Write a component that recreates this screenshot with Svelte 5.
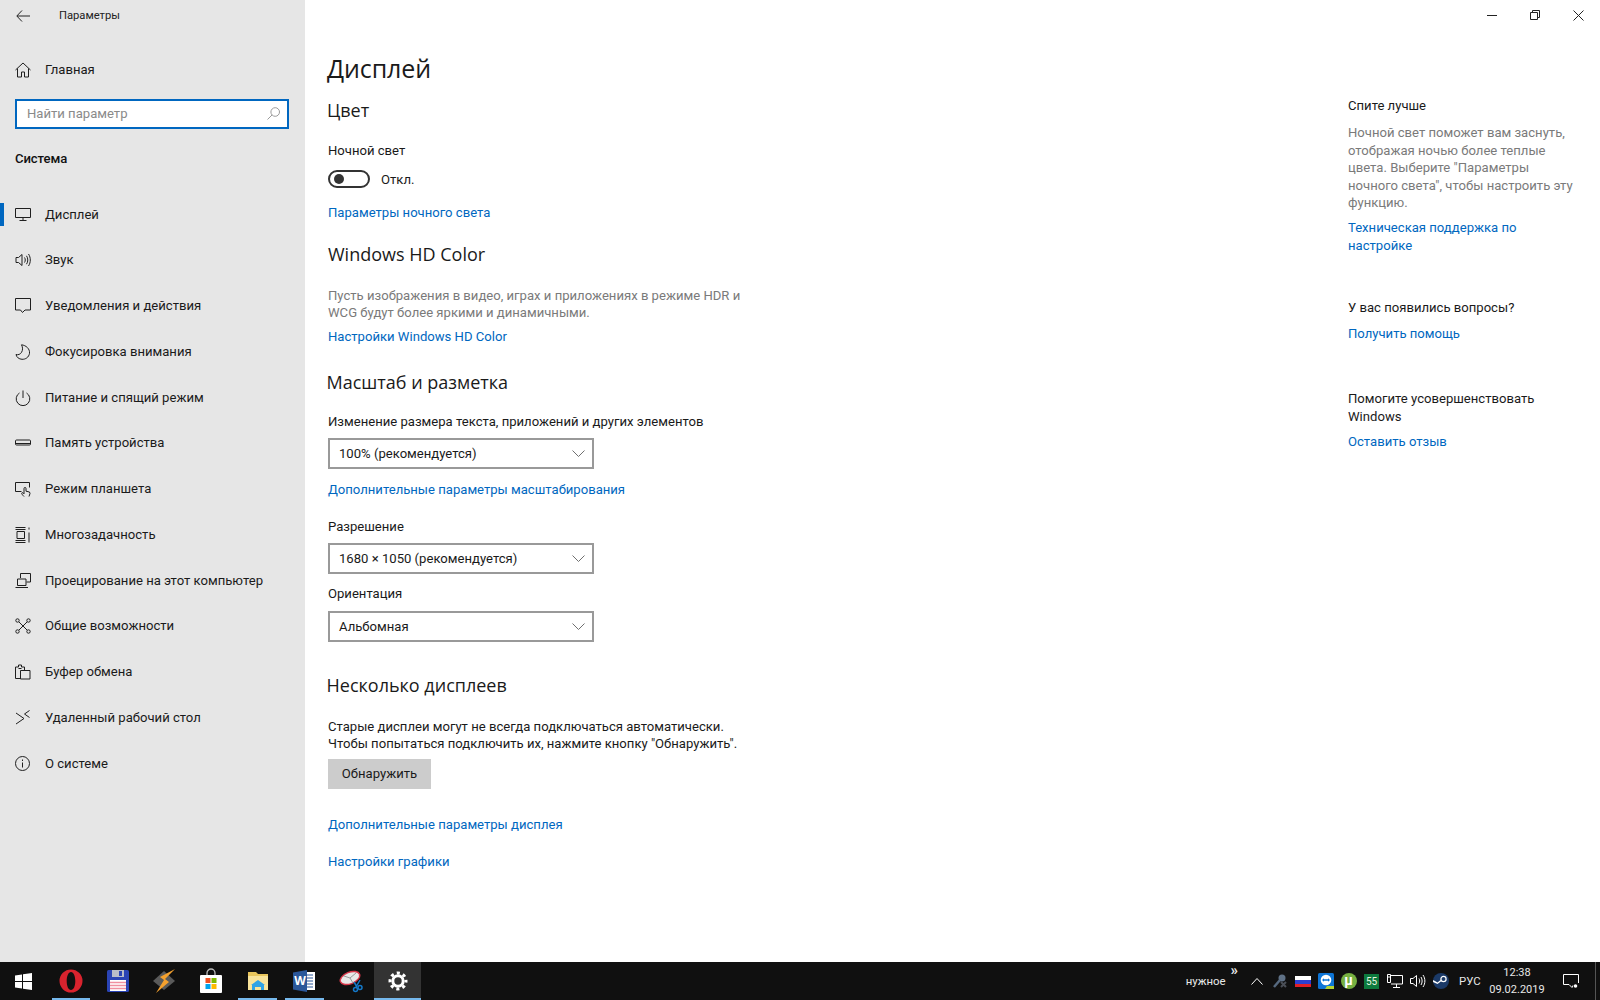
<script>
  const navItems = [
    { label: 'Дисплей', active: true, d: 'M.5 1.5h15v9H.5z M8 10.500v3 M4.500 13.500h7' },
    { label: 'Звук', d: 'M1 5.500h2.500L7 2.500v11l-3.500-3H1z M9.500 5.500c1 1.500 1 3.500 0 5 M11.500 3.800c1.700 2.500 1.700 5.900 0 8.400 M13.500 2c2.400 3.600 2.400 8.400 0 12' },
    { label: 'Уведомления и действия', d: 'M.5 .5h15v11.500H10L7.500 14.500 5.500 12H.5z' },
    { label: 'Фокусировка внимания', d: 'M6.500 .8c4.500 .5 8.500 4 8 8.500-.6 4-4 6.200-7.500 6-3-.2-5.500-2-6-4.800 4.500 1.500 8.500-4.200 5.500-9.700z' },
    { label: 'Питание и спящий режим', d: 'M8 .5v7.500 M4.500 3A6.800 6.800 0 1 0 11.500 3' },
    { label: 'Память устройства', d: 'M1.500 5h13a1 1 0 0 1 1 1v3a1 1 0 0 1-1 1h-13a1 1 0 0 1-1-1V6a1 1 0 0 1 1-1z M1 8.500h14' },
    { label: 'Режим планшета', d: 'M6.500 10.500H.5v-9h14v5 M9 15.500c-1.500-1.500-3-3.200-2-3.800.6-.3 1.300.3 2 1.200V7.500a1 1 0 0 1 2 0v2.700l3.500.8.5 1.500-1 3' },
    { label: 'Многозадачность', d: 'M.5 .5h10 M.5 15.500h10 M.5 13.500h10 M.5 2.500h10 M2 4.500h7.500v7H2z M14 .5v2 M14 5.500v10' },
    { label: 'Проецирование на этот компьютер', d: 'M5.500 5V.5h10v8.500h-4 M2.500 6h8.500v6.500H2.500z M.5 14.500h12.500' },
    { label: 'Общие возможности', d: 'M4 4l8 8 M12 4l-8 8 M4.200 2.500a1.700 1.700 0 1 1-3.400 0 1.700 1.700 0 0 1 3.400 0z M15.200 2.500a1.700 1.700 0 1 1-3.400 0 1.700 1.700 0 0 1 3.400 0z M4.200 13.500a1.700 1.700 0 1 1-3.400 0 1.700 1.700 0 0 1 3.400 0z M15.200 13.500a1.700 1.700 0 1 1-3.400 0 1.700 1.700 0 0 1 3.400 0z' },
    { label: 'Буфер обмена', d: 'M.5 3h3V1h3v2h3V6 M.5 3v11.500h5 M5.500 6.500h9.500v8.500H5.500z M3.500 4.500h3' },
    { label: 'Удаленный рабочий стол', d: 'M1 3l8 5.500-8 5.500 M14.500 .5L9.500 4l5 3.500' },
    { label: 'О системе', d: 'M14.500 7.500a7 7 0 1 1-14 0 7 7 0 0 1 14 0z M7.500 6.500v5 M7.500 3.500v1.500' }
  ];

  const lang = 'РУС';
</script>

<div class="screen">
  <div class="window">
    <aside class="sidebar">
      <div class="titlebar">
        <svg class="back" width="14" height="12" viewBox="0 0 14 12"><path d="M6 .5L.8 6 6 11.500 M1 6h13" /></svg>
        <span class="app-name">Параметры</span>
      </div>
      <div class="nav-item home">
        <svg class="icon" viewBox="0 0 16 16"><path d="M8 1L.5 8 M8 1l7.500 7 M2.500 6.500v8.500h4v-5h3v5h4V6.500" /></svg>
        <span>Главная</span>
      </div>
      <div class="search">
        <span>Найти параметр</span>
        <svg width="13" height="13" viewBox="0 0 13 13"><path d="M12.500 5a4.300 4.300 0 1 1-8.600 0 4.300 4.300 0 0 1 8.600 0z M5 8L.5 12.500" /></svg>
      </div>
      <div class="group-title">Система</div>
      <nav>
        {#each navItems as item}
          <div class="nav-item" class:active={item.active}>
            <svg class="icon" viewBox="0 0 16 16"><path d={item.d} /></svg>
            <span>{item.label}</span>
          </div>
        {/each}
      </nav>
    </aside>

    <main class="page">
      <div class="window-controls">
        <svg width="10" height="10" viewBox="0 0 10 10"><path d="M0 5.500h10" /></svg>
        <svg width="10" height="10" viewBox="0 0 10 10"><path d="M.5 2.500h7v7h-7z M2.500 2.500V.5h7v7h-2" /></svg>
        <svg width="11" height="11" viewBox="0 0 11 11"><path d="M.5 .5l10 10 M10.500 .5l-10 10" /></svg>
      </div>
      <div class="columns">
        <section class="content">
          <h1>Дисплей</h1>
          <h2 class="color">Цвет</h2>
          <div class="text night">Ночной свет</div>
          <div class="toggle-row">
            <span class="toggle"><i></i></span>
            <span class="toggle-state">Откл.</span>
          </div>
          <a class="link night-link">Параметры ночного света</a>
          <h2 class="hd">Windows HD Color</h2>
          <p class="muted hd-text">Пусть изображения в видео, играх и приложениях в режиме HDR и<br />WCG будут более яркими и динамичными.</p>
          <a class="link hd-link">Настройки Windows HD Color</a>
          <h2 class="scale">Масштаб и разметка</h2>
          <div class="text scale-label">Изменение размера текста, приложений и других элементов</div>
          <div class="select s1">
            <span>100% (рекомендуется)</span>
            <svg width="13" height="7" viewBox="0 0 13 7"><path d="M.5 .5l6 6 6-6" /></svg>
          </div>
          <a class="link scale-link">Дополнительные параметры масштабирования</a>
          <div class="text res-label">Разрешение</div>
          <div class="select s2">
            <span>1680 × 1050 (рекомендуется)</span>
            <svg width="13" height="7" viewBox="0 0 13 7"><path d="M.5 .5l6 6 6-6" /></svg>
          </div>
          <div class="text or-label">Ориентация</div>
          <div class="select s3">
            <span>Альбомная</span>
            <svg width="13" height="7" viewBox="0 0 13 7"><path d="M.5 .5l6 6 6-6" /></svg>
          </div>
          <h2 class="multi">Несколько дисплеев</h2>
          <p class="multi-text">Старые дисплеи могут не всегда подключаться автоматически.<br />Чтобы попытаться подключить их, нажмите кнопку "Обнаружить".</p>
          <button>Обнаружить</button>
          <a class="link adv-link">Дополнительные параметры дисплея</a>
          <a class="link gfx-link">Настройки графики</a>
        </section>

        <section class="side">
          <div class="text">Спите лучше</div>
          <p class="muted sleep-text">Ночной свет поможет вам заснуть,<br />отображая ночью более теплые<br />цвета. Выберите "Параметры<br />ночного света", чтобы настроить эту<br />функцию.</p>
          <a class="link multi-line">Техническая поддержка по<br />настройке</a>
          <div class="text q">У вас появились вопросы?</div>
          <a class="link after">Получить помощь</a>
          <p class="improve">Помогите усовершенствовать<br />Windows</p>
          <a class="link after">Оставить отзыв</a>
        </section>
      </div>
    </main>
  </div>

  <footer class="taskbar">
    <div class="tile start">
      <svg width="17" height="17" viewBox="0 0 17 17" fill="#fff"><path d="M0 2.500L7 1.500v6.500H0z M8 1.300L17 0v8H8z M0 9h7v6.500L0 14.500z M8 9h9v8l-9-1.300z" /></svg>
    </div>
    <div class="tile running">
      <svg width="24" height="24" viewBox="0 0 24 24"><path fill="#d9232e" fill-rule="evenodd" d="M12 .5a11.500 11.500 0 1 0 0 23 11.500 11.500 0 0 0 0-23z M12 3c2.600 0 4.300 4 4.300 9s-1.700 9-4.300 9-4.300-4-4.300-9 1.700-9 4.300-9z" /></svg>
    </div>
    <div class="tile">
      <svg width="24" height="24" viewBox="0 0 24 24"><rect x="1" y="1" width="22" height="22" rx="1.500" fill="#2a44b5" /><rect x="6" y="1" width="12" height="7" fill="#b9bdc9" /><rect x="13" y="2" width="3" height="5" fill="#2a44b5" /><rect x="4" y="11" width="16" height="11" fill="#fff" /><path d="M4 13.500h16 M4 16.500h16 M4 19.500h16" stroke="#f08fa0" stroke-width="1.500" /></svg>
    </div>
    <div class="tile">
      <svg width="26" height="26" viewBox="0 0 26 26"><path fill="#5a5a5a" d="M13 3l11 10-11 9L2 13z" /><path fill="#f5a12e" d="M24 1L9 9l4 3-8 13 13-11-4-3z" /></svg>
    </div>
    <div class="tile">
      <svg width="24" height="26" viewBox="0 0 24 26"><path fill="none" stroke="#bbb" stroke-width="1.300" d="M8 8V5a4 4 0 0 1 8 0v3" /><rect x="1" y="7" width="22" height="18" rx="1" fill="#fff" /><rect x="6.500" y="10" width="5" height="5" fill="#f25022" /><rect x="12.500" y="10" width="5" height="5" fill="#7fba00" /><rect x="6.500" y="16" width="5" height="5" fill="#00a4ef" /><rect x="12.500" y="16" width="5" height="5" fill="#ffb900" /></svg>
    </div>
    <div class="tile running">
      <svg width="22" height="20" viewBox="0 0 22 20"><path fill="#e8c55c" d="M1 1h8l2 2h10v16H1z" /><path fill="#f8e39a" d="M1 5h20v14H1z" /><path fill="#2fa3e6" d="M5 19v-5h-1l7-5 7 5h-1v5h-3v-3H8v3z" /></svg>
    </div>
    <div class="tile running">
      <svg width="22" height="22" viewBox="0 0 22 22"><rect x="8" y="2" width="14" height="18" fill="#fff" /><path d="M13 5h7 M13 8h7 M13 11h7 M13 14h7 M13 17h7" stroke="#2b579a" stroke-width="1.200" /><path fill="#2b579a" d="M0 2.500L14 0v22L0 19.500z" /><text x="7" y="15" class="word-w" text-anchor="middle">W</text></svg>
    </div>
    <div class="tile">
      <svg width="24" height="24" viewBox="0 0 24 24"><ellipse cx="11" cy="9" rx="11" ry="6.500" fill="#d8374a" transform="rotate(-22 11 9)" /><ellipse cx="11" cy="9" rx="9.500" ry="5" fill="#e8e8e8" transform="rotate(-22 11 9)" /><path d="M11 9L5 7 M11 9l6-5 M11 9l3 5" stroke="#999" fill="none" /><path d="M15 13l3 5 M21 11l-4 7" stroke="#1478c8" stroke-width="1.500" fill="none" /><circle cx="16.500" cy="20.500" r="2" fill="none" stroke="#1478c8" stroke-width="1.500" /><circle cx="21" cy="18.500" r="2" fill="none" stroke="#1478c8" stroke-width="1.500" /></svg>
    </div>
    <div class="tile running current">
      <svg width="20" height="20" viewBox="0 0 20 20" fill="none" stroke="#fff"><circle cx="10" cy="10" r="5.200" stroke-width="3" /><circle cx="10" cy="10" r="8" stroke-width="3" stroke-dasharray="3.100 3.183" stroke-dashoffset="1.500" /></svg>
    </div>

    <div class="tray">
      <span class="toolbar-name">нужное</span>
      <span class="more">»</span>
      <span class="tray-icon chevron"><svg width="12" height="7" viewBox="0 0 12 7" fill="none" stroke="#fff"><path d="M.5 6.500l5.500-6 5.500 6" /></svg></span>
      <span class="tray-icon">
        <svg width="16" height="16" viewBox="0 0 16 16"><circle cx="10" cy="5" r="3.500" fill="#5f7186" /><path d="M2 14l6-7" stroke="#56697f" stroke-width="2.500" /><path d="M9 9l5 5 M14 9l-5 5" stroke="#4a4f57" stroke-width="2" /></svg>
      </span>
      <span class="tray-icon">
        <svg width="16" height="11" viewBox="0 0 16 11"><rect width="16" height="4" fill="#fff" /><rect y="4" width="16" height="4" fill="#2b3fd0" /><rect y="8" width="16" height="3" fill="#e01f26" /></svg>
      </span>
      <span class="tray-icon">
        <svg width="16" height="16" viewBox="0 0 16 16"><rect width="16" height="16" rx="1.500" fill="#0e75d6" /><circle cx="8" cy="7" r="5.300" fill="#fff" /><path d="M4 7l2-1.800v1.100h4V5.200L12 7l-2 1.800V7.700H6v1.100z" fill="#0e75d6" /><path d="M7 16l2-3h7v3z" fill="#b5d334" /></svg>
      </span>
      <span class="tray-icon">
        <span class="utorrent">µ</span>
      </span>
      <span class="tray-icon">
        <span class="badge">55</span>
      </span>
      <span class="tray-icon">
        <svg width="16" height="14" viewBox="0 0 16 14" fill="none" stroke="#fff"><path d="M4 1.500H15.500V10H4 M9.500 10v3 M6 13.500h7 M.5 .5h3v8h-3z M1 3h2" /></svg>
      </span>
      <span class="tray-icon">
        <svg width="16" height="14" viewBox="0 0 16 14" fill="none" stroke="#fff"><path d="M.5 4.500H3L6.500 1.500v11L3 9.500H.5z M9 4.500c.9 1.500.9 3.500 0 5 M11 3c1.500 2.500 1.500 5.500 0 8 M13 1c2.500 3.700 2.500 8.300 0 12" /></svg>
      </span>
      <span class="tray-icon">
        <svg width="16" height="16" viewBox="0 0 16 16"><circle cx="8" cy="8" r="8" fill="#1b3a68" /><circle cx="10.500" cy="6" r="2.600" fill="none" stroke="#fff" stroke-width="1.200" /><path d="M0 9l4.500 2 4-3-1-1-3 2.500L.2 7z" fill="#fff" /></svg>
      </span>
      <span class="lang">{lang}</span>
      <div class="clock">
        <span>12:38</span>
        <span>09.02.2019</span>
      </div>
      <span class="notify">
        <svg width="16" height="15" viewBox="0 0 16 15" fill="none" stroke="#fff"><path d="M.5 .5h15v8.500 M.5 .5v10h5.500l3 3 .8-2" /><circle cx="12.500" cy="12" r="1.800" fill="#fff" stroke="none" /></svg>
      </span>
      <span class="show-desktop"></span>
    </div>
  </footer>
</div>

<style>
  :global(body) {
    margin: 0;
    background: #fff;
  }

  .screen {
    width: 1600px;
    height: 1000px;
    display: flex;
    flex-direction: column;
    overflow: hidden;
    font-family: Roboto, "Open Sans", sans-serif;
    font-size: 13.100px;
    line-height: 18px;
    color: #1a1a1a;
  }

  .window {
    flex: 1;
    display: flex;
    min-height: 0;
  }

  .sidebar {
    width: 305px;
    flex: none;
    background: #e6e6e6;
  }

  .titlebar {
    height: 32px;
    display: flex;
    align-items: center;
  }

  .back {
    margin-left: 16px;
    fill: none;
    stroke: #222;
  }

  .app-name {
    margin-left: 29px;
    font-size: 11.200px;
    color: #222;
  }

  .nav-item {
    height: 45.750px;
    display: flex;
    align-items: center;
    padding-left: 15px;
    position: relative;
  }

  .nav-item .icon {
    width: 16px;
    height: 16px;
    flex: none;
    fill: none;
    stroke: #1f1f1f;
    stroke-width: 1;
    margin-right: 14px;
  }

  .nav-item.active::before {
    content: '';
    position: absolute;
    left: 0;
    top: 11px;
    width: 4px;
    height: 23px;
    background: #0067c0;
  }

  .home {
    margin-top: 15px;
  }

  .search {
    width: 274px;
    height: 30px;
    box-sizing: border-box;
    margin: 6px 0 0 15px;
    border: 2px solid #0067c0;
    background: #fff;
    display: flex;
    align-items: center;
    justify-content: space-between;
    padding: 0 7px 0 10px;
    color: #8a8a8a;
  }

  .search svg {
    fill: none;
    stroke: #9a9a9a;
  }

  .group-title {
    margin: 21px 0 0 15px;
    font-weight: 500;
    letter-spacing: -0.1px;
    color: #111;
  }

  nav {
    margin-top: 24px;
  }

  .page {
    flex: 1;
    display: flex;
    flex-direction: column;
    min-width: 0;
  }

  .window-controls {
    height: 30px;
    margin-bottom: 2px;
    display: flex;
    align-items: center;
    justify-content: flex-end;
    gap: 33px;
    padding-right: 16px;
  }

  .window-controls svg {
    fill: none;
    stroke: #222;
  }

  .columns {
    display: flex;
  }

  .content {
    width: 1043px;
    padding-left: 23px;
    flex: none;
    box-sizing: border-box;
  }

  h1 {
    margin: 18px 0 0 -1px;
    font-family: "Open Sans", sans-serif;
    font-size: 25px;
    letter-spacing: -0.1px;
    line-height: 36px;
    font-weight: 400;
    color: #1a1a1a;
  }

  h2 {
    margin: 0;
    font-family: "Open Sans", sans-serif;
    font-size: 18px;
    line-height: 26px;
    font-weight: 400;
    color: #1a1a1a;
  }

  p {
    margin: 0;
    line-height: 17.500px;
  }

  .link {
    display: block;
    color: #0067c0;
  }

  .muted {
    color: #7a7a7a;
  }

  .color { margin-top: 11px; margin-left: -1px; }
  .night { margin-top: 19px; }
  .toggle-row {
    margin-top: 9px;
    display: flex;
    align-items: center;
    gap: 11px;
  }
  .toggle-state {
    padding-top: 2px;
  }
  .toggle {
    width: 42px;
    height: 18px;
    box-sizing: border-box;
    border: 2px solid #333;
    border-radius: 9px;
    display: flex;
    align-items: center;
    padding-left: 4px;
  }
  .toggle i {
    width: 10px;
    height: 10px;
    border-radius: 50%;
    background: #333;
  }
  .night-link { margin-top: 15px; }
  .hd { margin-top: 19px; }
  .hd-text { margin-top: 20px; line-height: 17px; }
  .hd-link { margin-top: 6.500px; }
  .scale { margin-top: 23px; margin-left: -1.500px; }
  .scale-label { margin-top: 18.500px; }
  .scale-link { margin-top: 12px; }
  .res-label { margin-top: 19px; }
  .or-label { margin-top: 11px; }
  .multi { margin-top: 30px; margin-left: -1.500px; }
  .multi-text { margin-top: 20px; line-height: 17px; }

  .select {
    width: 266px;
    height: 31px;
    box-sizing: border-box;
    border: 2px solid #999;
    display: flex;
    align-items: center;
    justify-content: space-between;
    padding: 0 7px 0 9px;
  }
  .select span {
    padding-top: 1px;
  }
  .select svg {
    fill: none;
    stroke: #6f6f6f;
  }
  .s1 { margin-top: 6.500px; }
  .s2 { margin-top: 7px; }
  .s3 { margin-top: 8px; }

  button {
    display: block;
    width: 103px;
    height: 30px;
    margin-top: 7px;
    padding: 0;
    border: none;
    background: #cccccc;
    font: inherit;
    color: #1a1a1a;
  }

  .adv-link { margin-top: 27px; }
  .gfx-link { margin-top: 19px; }

  .side {
    width: 240px;
    margin-top: 65px;
  }

  .sleep-text { margin-top: 9px; }
  .multi-line {
    margin-top: 7.500px;
    line-height: 17.500px;
  }
  .q { margin-top: 45px; }
  .after { margin-top: 8px; }
  .improve { margin-top: 47px; }

  .taskbar {
    height: 38px;
    flex: none;
    background: #101010;
    display: flex;
    color: #e8e8e8;
  }

  .tile {
    width: 46.670px;
    flex: none;
    box-sizing: border-box;
    display: flex;
    align-items: center;
    justify-content: center;
    position: relative;
  }

  .start {
    width: 47.800px;
  }

  .running::after {
    content: '';
    position: absolute;
    left: 4px;
    right: 4px;
    bottom: 0;
    height: 2px;
    background: #76b9ed;
  }

  .current {
    background: #333;
  }

  .current::after {
    left: 0;
    right: 0;
  }

  .word-w {
    fill: #fff;
    font-size: 12px;
    font-weight: 700;
    font-family: "Open Sans", sans-serif;
  }

  .tray {
    margin-left: auto;
    display: flex;
    align-items: center;
    height: 100%;
  }

  .toolbar-name {
    font-size: 11.400px;
    margin-right: 5px;
  }

  .more {
    font-size: 15px;
    font-weight: 700;
    line-height: 13px;
    align-self: flex-start;
    margin: 2px 7px 0 0;
  }

  .tray-icon {
    width: 23px;
    display: flex;
    justify-content: center;
    align-items: center;
  }

  .utorrent {
    width: 16px;
    height: 16px;
    border-radius: 50%;
    background: #76b041;
    color: #fff;
    font-size: 14px;
    line-height: 15px;
    font-weight: 700;
    text-align: center;
  }

  .badge {
    width: 15px;
    height: 15px;
    background: #0d7a3e;
    color: #e8f5e0;
    font-size: 10px;
    line-height: 15px;
    text-align: center;
  }

  .lang {
    font-size: 11.400px;
    margin-left: 7px;
    width: 23px;
  }

  .clock {
    width: 70px;
    display: flex;
    flex-direction: column;
    align-items: center;
    font-size: 11px;
    line-height: 17px;
  }

  .notify {
    width: 34px;
    display: flex;
    justify-content: center;
    margin-left: 2px;
    margin-right: 7px;
  }

  .show-desktop {
    width: 1px;
    height: 100%;
    background: #555;
    margin-right: 4px;
  }
</style>
